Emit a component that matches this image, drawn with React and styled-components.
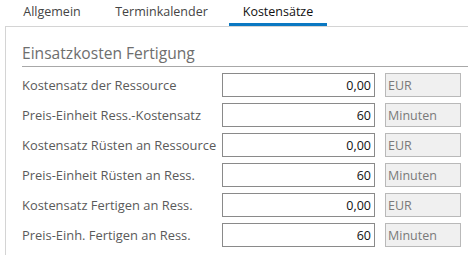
import React from "react";
import styled, { createGlobalStyle } from "styled-components";

const Global = createGlobalStyle`
  html, body { margin: 0; padding: 0; background: #fff; }
  body { font-family: "Open Sans", "Noto Sans", Arial, sans-serif; }
`;

const Page = styled.div`
  width: 468px;
  height: 256px;
  overflow: hidden;
  background: #fff;
`;

const Tabs = styled.div`
  display: flex;
  gap: 9px;
  padding-left: 10px;
  height: 26px;
`;

const Tab = styled.div`
  width: ${(p) => p.$w}px;
  box-sizing: border-box;
  display: flex;
  justify-content: center;
  align-items: center;
  height: 26px;
  padding-bottom: 1px;
  font-size: 12.5px;
  color: ${(p) => (p.$active ? "#111" : "#444")};
  border-bottom: 3px solid ${(p) => (p.$active ? "#0a78c2" : "transparent")};
`;

const Panel = styled.div`
  margin-left: 5px;
  border-left: 1px solid #d4d4d4;
  border-top: 1px solid #d4d4d4;
  height: 229px;
  padding: 15px 0 0 16px;
  box-sizing: border-box;
`;

const Title = styled.div`
  font-size: 15.6px;
  color: #6e6e6e;
  line-height: 23px;
  padding-bottom: 1px;
  border-bottom: 1px solid #a8a8a8;
`;

const Rows = styled.div`
  display: flex;
  flex-direction: column;
  gap: 6px;
  margin-top: 6px;
`;

const Row = styled.div`
  display: flex;
  align-items: center;
  height: 24px;
`;

const Label = styled.div`
  width: 200px;
  font-size: 12.9px;
  color: #5a5a5a;
  white-space: nowrap;
`;

const Input = styled.div`
  width: 153px;
  height: 24px;
  box-sizing: border-box;
  border: 1px solid #8a8a8a;
  background: #fff;
  font-size: 12.5px;
  color: #111;
  display: flex;
  align-items: center;
  justify-content: flex-end;
  padding-right: 3px;
`;

const Unit = styled.div`
  margin-left: 10px;
  width: 76px;
  height: 24px;
  box-sizing: border-box;
  border: 1px solid #b9b9b9;
  background: #f0f0f0;
  font-size: 12.5px;
  color: #7a7a7a;
  display: flex;
  align-items: center;
  padding-left: 2px;
`;

const rows = [
  ["Kostensatz der Ressource", "0,00", "EUR"],
  ["Preis-Einheit Ress.-Kostensatz", "60", "Minuten"],
  ["Kostensatz Rüsten an Ressource", "0,00", "EUR"],
  ["Preis-Einheit Rüsten an Ress.", "60", "Minuten"],
  ["Kostensatz Fertigen an Ress.", "0,00", "EUR"],
  ["Preis-Einh. Fertigen an Ress.", "60", "Minuten"],
];

export default function App() {
  return (
    <Page>
      <Global />
      <Tabs>
        <Tab $w={84}>Allgemein</Tab>
        <Tab $w={117}>Terminkalender</Tab>
        <Tab $w={98} $active>Kostensätze</Tab>
      </Tabs>
      <Panel>
        <Title>Einsatzkosten Fertigung</Title>
        <Rows>
          {rows.map(([l, v, u]) => (
            <Row key={l}>
              <Label>{l}</Label>
              <Input>{v}</Input>
              <Unit>{u}</Unit>
            </Row>
          ))}
        </Rows>
      </Panel>
    </Page>
  );
}
